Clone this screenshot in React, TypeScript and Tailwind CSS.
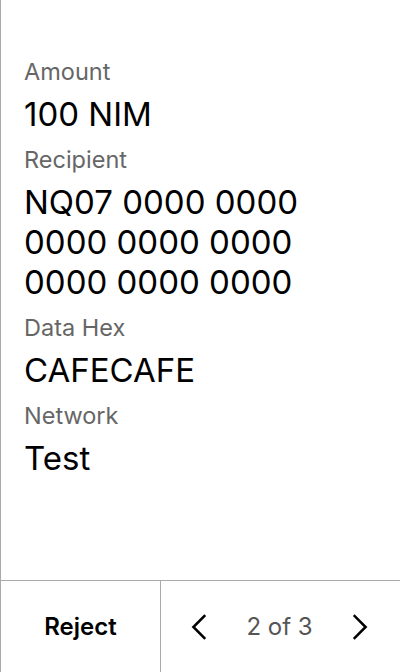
const fields = [
  { label: 'Amount', value: ['100 NIM'] },
  { label: 'Recipient', value: ['NQ07 0000 0000', '0000 0000 0000', '0000 0000 0000'] },
  { label: 'Data Hex', value: ['CAFECAFE'] },
  { label: 'Network', value: ['Test'] },
];

const Chevron = ({ dir }: { dir: 'left' | 'right' }) => (
  <svg width="32" height="32" viewBox="0 0 24 24" fill="none" stroke="#000" strokeWidth="1.9" strokeLinecap="square">
    {dir === 'left' ? <path d="M14.5 3.8 L6.3 12 L14.5 20.2" /> : <path d="M9.5 3.8 L17.7 12 L9.5 20.2" />}
  </svg>
);

export default function App() {
  return (
    <div className="w-[400px] h-[672px] bg-white border-l border-[#aaa] flex flex-col font-['Inter',sans-serif]">
      {/* Fields */}
      <div className="flex-1 pt-[57px] pl-[23px] flex flex-col gap-[11px]">
        {fields.map(f => (
          <div key={f.label} className="flex flex-col">
            <div className="text-[23.5px] leading-[30px] text-[#666]">{f.label}</div>
            <div className="mt-[7px] text-[33px] leading-[40px] text-black">
              {f.value.map((line, i) => <div key={i}>{line}</div>)}
            </div>
          </div>
        ))}
      </div>

      {/* Footer */}
      <div className="h-[92px] border-t border-[#aaa] flex">
        <button className="w-[160px] border-r border-[#aaa] flex items-center justify-center text-[24px] font-semibold text-black">
          Reject
        </button>
        <div className="flex-1 flex items-center justify-between pl-[24px] pr-[26px]">
          <Chevron dir="left" />
          <span className="text-[24px] text-[#555]">2 of 3</span>
          <Chevron dir="right" />
        </div>
      </div>
    </div>
  );
}
